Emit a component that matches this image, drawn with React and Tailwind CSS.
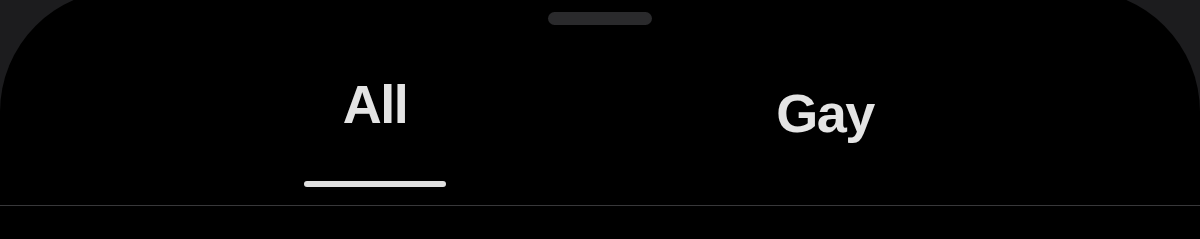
export default function App() {
  return (
    <div className="h-[239px] w-[1200px] overflow-hidden bg-[#1c1c1e]">
      {/* sheet */}
      <div className="-mt-[10px] h-[251px] rounded-t-[122px] bg-black">
        <div className="flex justify-center pt-[22px]">
          <div className="h-[13px] w-[104px] rounded-full bg-[#2a2a2c]" />
        </div>
        <div
          className="h-[181px] border-b border-[#38383a]"
          style={{ fontFamily: '"Liberation Sans", Arial, sans-serif' }}
        >
          <div className="grid grid-cols-2 items-start px-[150px]">
            <div className="flex flex-col items-center pt-[52px]">
              <span className="text-[54px] font-bold leading-none tracking-[-1.5px] text-[#e4e4e4]">
                All
              </span>
              <div className="mt-[50px] h-[6px] w-[142px] rounded-full bg-[#e0e0e0]" />
            </div>
            <div className="flex flex-col items-center pt-[61px]">
              <span className="text-[54px] font-bold leading-none tracking-[-1.5px] text-[#e4e4e4]">
                Gay
              </span>
            </div>
          </div>
        </div>
      </div>
    </div>
  );
}
